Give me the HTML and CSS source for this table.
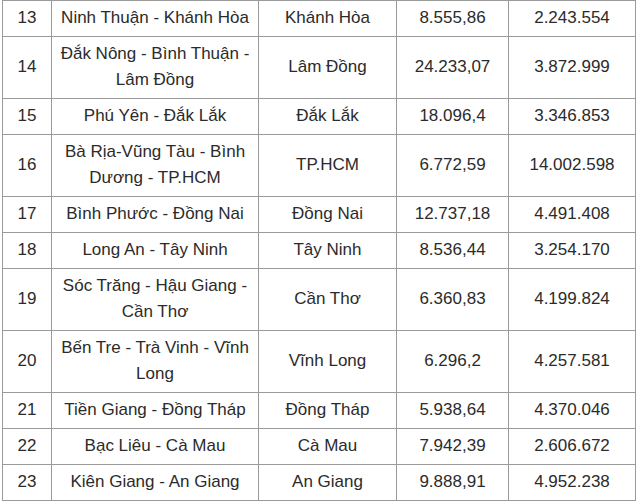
FILE: index.html
```html
<!DOCTYPE html>
<html lang="vi">
<head>
<meta charset="utf-8">
<title>Bảng</title>
<link rel="stylesheet" href="styles.css">
</head>
<body>
<table class="data">
  <colgroup>
    <col class="c-no"><col class="c-name"><col class="c-center"><col class="c-area"><col class="c-pop">
  </colgroup>
  <tbody>
    <tr><td>13</td><td>Ninh Thuận - Khánh Hòa</td><td>Khánh Hòa</td><td>8.555,86</td><td>2.243.554</td></tr>
    <tr><td>14</td><td>Đắk Nông - Bình Thuận - Lâm Đồng</td><td>Lâm Đồng</td><td>24.233,07</td><td>3.872.999</td></tr>
    <tr><td>15</td><td>Phú Yên - Đắk Lắk</td><td>Đắk Lắk</td><td>18.096,4</td><td>3.346.853</td></tr>
    <tr><td>16</td><td>Bà Rịa-Vũng Tàu - Bình Dương - TP.HCM</td><td>TP.HCM</td><td>6.772,59</td><td>14.002.598</td></tr>
    <tr><td>17</td><td>Bình Phước - Đồng Nai</td><td>Đồng Nai</td><td>12.737,18</td><td>4.491.408</td></tr>
    <tr><td>18</td><td>Long An - Tây Ninh</td><td>Tây Ninh</td><td>8.536,44</td><td>3.254.170</td></tr>
    <tr><td>19</td><td>Sóc Trăng - Hậu Giang - Cần Thơ</td><td>Cần Thơ</td><td>6.360,83</td><td>4.199.824</td></tr>
    <tr><td>20</td><td>Bến Tre - Trà Vinh - Vĩnh Long</td><td>Vĩnh Long</td><td>6.296,2</td><td>4.257.581</td></tr>
    <tr><td>21</td><td>Tiền Giang - Đồng Tháp</td><td>Đồng Tháp</td><td>5.938,64</td><td>4.370.046</td></tr>
    <tr><td>22</td><td>Bạc Liêu - Cà Mau</td><td>Cà Mau</td><td>7.942,39</td><td>2.606.672</td></tr>
    <tr><td>23</td><td>Kiên Giang - An Giang</td><td>An Giang</td><td>9.888,91</td><td>4.952.238</td></tr>
  </tbody>
</table>
</body>
</html>
```
FILE: styles.css
```css
html, body {
  margin: 0;
  padding: 0;
  background: #ffffff;
}
.data {
  margin-left: 2px;
  width: 633px;
  table-layout: fixed;
  border-collapse: collapse;
  font-family: "Liberation Sans", Arial, sans-serif;
  font-size: 17px;
  line-height: 26px;
  color: #2b2b2b;
}
.c-no { width: 49px; }
.c-name { width: 207px; }
.c-center { width: 138px; }
.c-area { width: 112px; }
.c-pop { width: 127px; }
.data td {
  border: 1px solid #9a9a9a;
  padding: 4px 6px 5px;
  text-align: center;
  vertical-align: middle;
}
```
